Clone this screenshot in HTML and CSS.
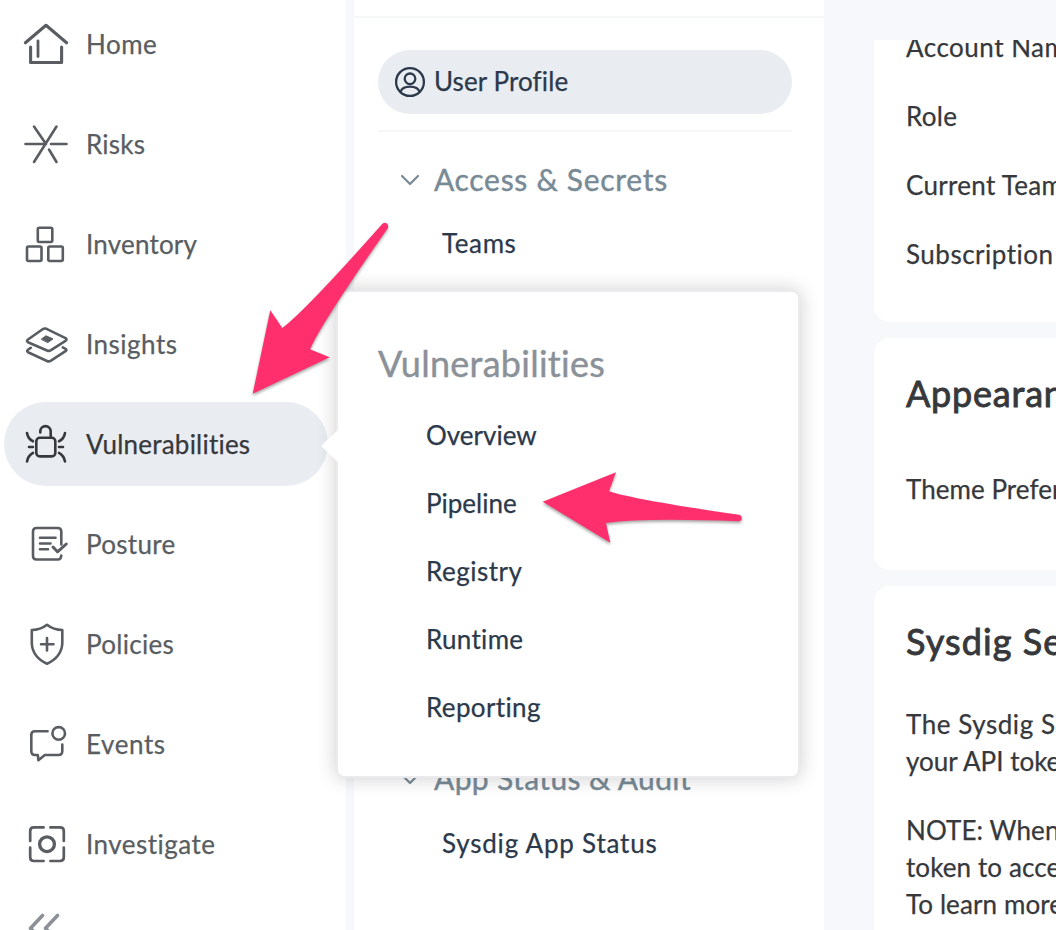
FILE: index.html
```html
<!DOCTYPE html>
<html lang="en">
<head>
<meta charset="utf-8">
<title>User Profile</title>
<link rel="stylesheet" href="styles.css">
</head>
<body>
<div class="app">
  <nav class="sidebar">
    <a class="nav-item"><svg class="icon" viewBox="0 0 48 48"><path stroke-width="3.1" d="M3.4 22.800 24 5.300 44.600 22.800M8.600 27v15.500h31V27"/><path stroke-width="2.800" d="M16 21v15.500"/></svg><span class="w-home">Home</span></a>
    <a class="nav-item"><svg class="icon" viewBox="0 0 48 48"><path d="M3.5 24H24M29 24h15.500M34.500 6.500 12 42M12 6.500 24 24M27 29.500 34.500 42"/></svg><span class="w-risks">Risks</span></a>
    <a class="nav-item"><svg class="icon" viewBox="0 0 48 48"><rect x="15.800" y="7.800" width="14.500" height="14.200" rx="1.500"/><rect x="5" y="26.500" width="14.500" height="14.500" rx="1.500"/><rect x="26.300" y="26.500" width="14.500" height="14.500" rx="1.500"/></svg><span class="w-inventory">Inventory</span></a>
    <a class="nav-item"><svg class="icon" viewBox="0 0 48 48"><path d="M24 8.600Q22.500 8.200 21 9L6 19.500Q4 21 6 22.200L25 30.500Q27 31.400 29 30.200L43.500 20.800Q45.500 19.400 43.500 18.200ZM8.800 27.800 6 29.800Q4.200 31.200 6 32.200L25 41Q27 41.900 29 40.600L43.500 31.200Q45.300 29.900 43.500 28.800L40.800 27.400"/><path class="solid" d="M19.500 19 24 15.800 31 18.900 26 22.400Z"/></svg><span class="w-insights">Insights</span></a>
    <a class="nav-item active"><svg class="icon" viewBox="0 0 48 48"><rect x="14.300" y="17.800" width="19" height="18.600" rx="3.500"/><path d="M28.700 17.500V11.300A5.200 5.200 0 0 0 18.300 11.300V12.500M5 13Q6 19 11 21.300M7 27h4M11 32.800Q6 35.500 5 41.500M43 13Q42 19 37 21.300M41 27h-4M37 32.800Q42 35.500 43 41.500"/></svg><span class="w-vuln">Vulnerabilities</span></a>
    <a class="nav-item"><svg class="icon" viewBox="0 0 48 48"><path d="M39.300 24.500V11.500Q39.300 8 35.800 8H14.500Q11 8 11 11.500V36Q11 39.500 14.500 39.500H35.800Q39 39.500 39.300 35.500M18 17.700h15.500M18 23.500h10.500M18 29.300h8"/><path stroke-width="3" d="M31 27 35.500 31.800 44.300 24"/></svg><span class="w-posture">Posture</span></a>
    <a class="nav-item"><svg class="icon" viewBox="0 0 48 48"><path d="M25 4.800Q31.500 10 40.300 10V23.500Q39.500 37 25 43.800Q10.500 37 9.800 23.500V10Q18.500 10 25 4.800ZM25 18v12.500M19 24.200h12.500"/></svg><span class="w-policies">Policies</span></a>
    <a class="nav-item"><svg class="icon" viewBox="0 0 48 48"><circle cx="36.700" cy="13.400" r="6.300"/><path d="M25.600 11.300H13Q9.300 11.300 9.300 15V31Q9.300 35 13 35H15.800L16.400 40.300 22.800 35H36.500Q40.300 35 40.300 31V24.500"/></svg><span class="w-events">Events</span></a>
    <a class="nav-item"><svg class="icon" viewBox="0 0 48 48"><path stroke-width="2.700" d="M8.200 21V11Q8.200 7.400 11.800 7.400H21.600M28.400 7.400H38Q41.800 7.400 41.800 11V21M41.800 27.500V37.200Q41.800 41 38 41H28.400M21.600 41H11.800Q8.200 41 8.200 37.200V27.500"/><circle cx="25" cy="24.200" r="7.400" stroke-width="3.300"/></svg><span class="w-investigate">Investigate</span></a>
    <a class="collapse"><svg class="icon" viewBox="0 0 48 48"><path stroke-width="3.600" d="M20.500 9.500 8.500 22.300 20.500 35M35.500 9.500 23.500 22.300 35.500 35"/></svg></a>
  </nav>
  <aside class="settings">
    <div class="settings-top"></div>
    <div class="settings-body">
      <a class="profile"><svg class="profile-icon" viewBox="0 0 32 32"><circle cx="16" cy="16" r="13.900"/><circle cx="16" cy="12.800" r="5.300"/><path d="M6.500 26Q8 20.600 16 20.600T25.500 26"/></svg><span class="w-profile">User Profile</span></a>
      <section class="group">
        <h3><svg class="chevron" viewBox="0 0 20 12"><path d="M2 2l8 8 8-8"/></svg><span class="w-access">Access &amp; Secrets</span></h3>
        <a class="w-teams">Teams</a>
      </section>
      <section class="group">
        <h3><svg class="chevron" viewBox="0 0 20 12"><path d="M2 2l8 8 8-8"/></svg><span class="w-audit">App Status &amp; Audit</span></h3>
        <a class="w-status">Sysdig App Status</a>
      </section>
    </div>
  </aside>
  <main class="content">
    <section class="card account">
      <p class="w-account">Account Name</p><p class="w-role">Role</p><p class="w-team">Current Team</p><p class="w-sub">Subscription</p>
    </section>
    <section class="card appearance">
      <h2 class="w-appear">Appearance</h2>
      <p class="w-theme">Theme Preference</p>
    </section>
    <section class="card token">
      <h2 class="w-token">Sysdig Secure API</h2>
      <p><span class="w-t1">The Sysdig Secure API</span><br><span class="w-t2">your API token</span></p>
      <p><span class="w-t3">NOTE: When you</span><br><span class="w-t4">token to access</span><br><span class="w-t5">To learn more</span></p>
    </section>
  </main>
</div>
<div class="flyout">
  <svg class="notch" viewBox="0 0 18 36"><path d="M18 1 1.500 16.500Q0 18 1.500 19.500L18 35Z"/></svg>
  <h2 class="w-title">Vulnerabilities</h2>
  <a class="w-overview">Overview</a>
  <a class="w-pipeline">Pipeline</a>
  <a class="w-registry">Registry</a>
  <a class="w-runtime">Runtime</a>
  <a class="w-reporting">Reporting</a>
</div>
<svg class="annotations" viewBox="0 0 1056 930">
  <path d="M252.700 393.700 270.300 310.300 282.300 328Q305 311 382 224.300Q385 221.500 387.300 224Q389 226 387.600 228.500Q322 322 310 349.300L329.700 357.300Z"/>
  <path d="M542.700 501.700 616 472.300 609 491.300Q635 500 739 514.700Q742 515.500 741.800 518.500Q741.500 521.300 738.500 521.300Q645 517.500 606 523L610.300 542.700Z"/>
</svg>
</body>
</html>
```

FILE: styles.css
```css
* { box-sizing: border-box; }
body {
  margin: 0;
  width: 1056px;
  height: 930px;
  overflow: hidden;
  position: relative;
  background: #f7f8fb;
  font-family: Lato, "Open Sans", sans-serif;
  font-size: 26px;
  line-height: 38px;
  font-variant-ligatures: none;
  -webkit-text-stroke: .25px currentColor;
  color: #36383b;
}
h2, h3, p { margin: 0; font-weight: 400; }
span, a, h2, p { white-space: nowrap; }
.app { display: grid; grid-template-columns: 354px 470px 232px; height: 930px; }

.sidebar { background: #fff; border-right: 8px solid #f7f8fb; padding: 2px 0 0 4px; display: flex; flex-direction: column; gap: 16px; overflow: hidden; height: 930px; }
.nav-item { flex: none; display: flex; align-items: center; gap: 16px; width: 324px; height: 84px; padding-left: 18px; border-radius: 42px; color: #595d62; }
.nav-item.active { background: #e9ecf1; color: #36383b; }
.icon { flex: none; width: 48px; height: 48px; fill: none; stroke: currentColor; stroke-width: 2.6; stroke-linecap: round; stroke-linejoin: round; }
.icon .solid { fill: currentColor; stroke-width: 1; }
.collapse { flex: none; height: 48px; padding-left: 18px; margin-top: 4px; color: #8b9197; }

.settings { background: #fff; overflow: hidden; height: 930px; }
.settings-top { height: 18px; border-bottom: 2px solid #f6f7f9; }
.settings-body { padding: 32px 32px 0 24px; color: #2b394b; }
.profile { display: flex; align-items: center; gap: 8px; height: 64px; padding-left: 16px; border-radius: 32px; background: #e9ecf1; }
.profile span { padding-bottom: 2px; }
.profile-icon { width: 32px; height: 32px; fill: none; stroke: currentColor; stroke-width: 2.3; }
.group { height: 600px; padding-left: 20px; }
.group:nth-of-type(1) { margin-top: 16px; border-top: 2px solid #f6f7f9; }
.group h3 { display: flex; align-items: center; gap: 14px; height: 64px; margin-top: 16px; font-size: 30px; color: #778a96; -webkit-text-stroke-width: .4px; }
.group:nth-of-type(1) h3 { margin-top: 15px; }
.group:nth-of-type(1) a { padding-top: 1px; }
.group:nth-of-type(2) a { padding-top: 2px; }
.group a { display: block; margin-left: 44px; line-height: 62px; }
.chevron { width: 20px; height: 12px; margin: 2px 2px 0 2px; fill: none; stroke: currentColor; stroke-width: 2.2; stroke-linecap: round; stroke-linejoin: round; }
.group h3 span { margin-left: -2px; }

.content { background: #f7f8fb; padding: 40px 0 0 50px; display: flex; flex-direction: column; gap: 16px; overflow: hidden; height: 930px; }
.card { flex: none; background: #fff; border-radius: 16px 0 0 16px; padding-left: 32px; overflow: hidden; }
.card h2 { font-size: 36px; line-height: 48px; font-weight: 400; -webkit-text-stroke: .9px currentColor; }
.account { height: 282px; border-top-left-radius: 0; display: flex; flex-direction: column; gap: 31px; }
.account p:first-child { margin-top: -12px; }
.appearance { height: 232px; padding-top: 31px; }
.appearance p { margin-top: 53px; }
.token { height: 400px; padding-top: 31px; line-height: 37px; }
.token p { margin-top: 41px; }
.token p + p { margin-top: 32px; }

.flyout { position: absolute; left: 336px; top: 290px; width: 464px; height: 488px; padding: 47px 0 0 40px; background: #fff; border: 2px solid #ebebed; border-radius: 8px; box-shadow: 0 0 20px rgba(0, 0, 0, .2); color: #2b394b; }
.flyout h2 { font-size: 36px; line-height: 48px; color: #8b9198; margin-bottom: 14px; -webkit-text-stroke-width: .4px; }
.flyout a { display: block; padding-left: 48px; line-height: 68px; }
.notch { position: absolute; left: -17px; top: 136px; width: 18px; height: 36px; fill: #fff; }
.annotations { position: absolute; left: 0; top: 0; width: 1056px; height: 930px; fill: #ff2f6d; filter: drop-shadow(0 2px 1.5px rgba(0, 0, 0, .35)); pointer-events: none; }

/* Tracking per label */
.w-home { letter-spacing: .5px; }
.w-risks { letter-spacing: .25px; }
.w-inventory { letter-spacing: .2px; }
.w-insights { letter-spacing: .5px; }
.w-vuln { letter-spacing: .22px; }
.w-posture { letter-spacing: .3px; }
.w-policies { letter-spacing: .3px; }
.w-events { letter-spacing: .6px; }
.w-investigate { letter-spacing: .48px; }
.w-profile { letter-spacing: .1px; }
.w-access { letter-spacing: .7px; }
.w-teams { letter-spacing: .6px; }
.w-audit { letter-spacing: .38px; }
.w-status { letter-spacing: .8px; }
.w-title { letter-spacing: .27px; }
.w-registry { letter-spacing: .5px; }
.w-runtime { letter-spacing: .3px; }
.w-reporting { letter-spacing: .36px; }
.w-account { letter-spacing: .5px; }
.w-role { letter-spacing: .3px; }
.w-team { letter-spacing: .3px; }
.w-sub { letter-spacing: .5px; }
.w-appear { letter-spacing: .8px; }
.w-theme { letter-spacing: .05px; }
.w-token { letter-spacing: 1.1px; }
.w-t1 { letter-spacing: .55px; }
.w-t3, .w-t4, .w-t5 { letter-spacing: .1px; }
```
